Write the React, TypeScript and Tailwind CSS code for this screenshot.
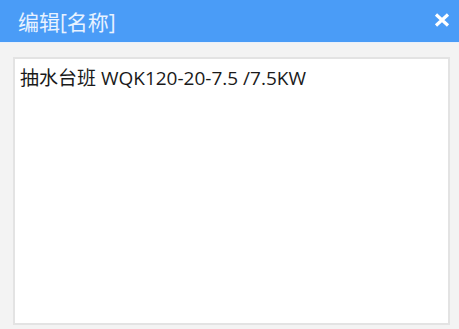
export default function App() {
  return (
    <div className="w-[459px] h-[329px] bg-[#f3f3f3] flex flex-col overflow-hidden" style={{ fontFamily: '"Open Sans", "Noto Sans CJK SC", sans-serif' }}>
      <div className="h-[43px] shrink-0 bg-[#4a9cf7] flex items-center justify-between pl-[18px] pr-[9px] pt-[2px] border-b border-[#e8f0fb]">
        <span className="text-[21px] text-[#e8f2ff] leading-none">编辑[名称]</span>
        <button className="mb-[5px] flex items-center justify-center">
          <svg width="16" height="14" viewBox="0 0 16 14">
            <path d="M2 1.5 L14 12.5 M14 1.5 L2 12.5" stroke="white" strokeWidth="3.2" />
          </svg>
        </button>
      </div>
      <div className="flex-1 pt-[14px] pl-[13px] pr-[9px] pb-[4px]">
        <div className="h-full bg-white border-2 border-[#e3e3e3] px-[5px] pt-[7px]">
          <p className="text-[19px] text-[#1a1a1a] leading-[24px]">抽水台班 WQK120-20-7.5 /7.5KW</p>
        </div>
      </div>
    </div>
  )
}
